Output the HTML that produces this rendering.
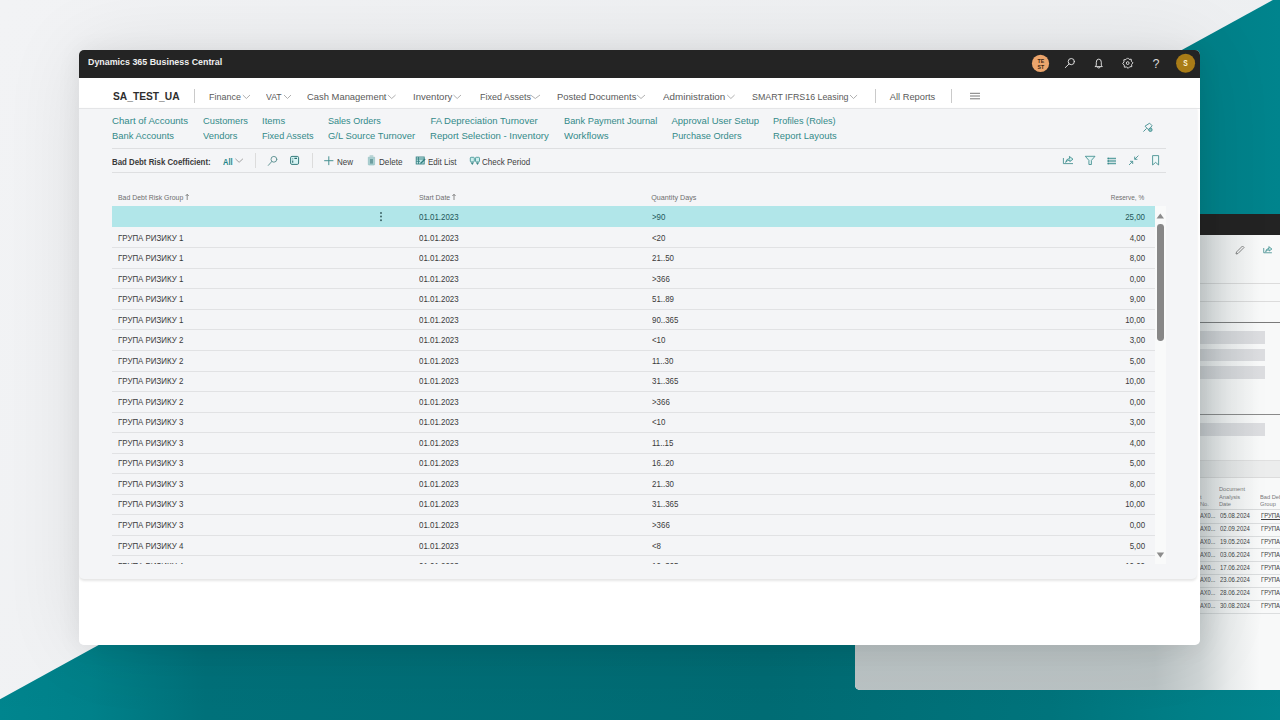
<!DOCTYPE html>
<html><head><meta charset="utf-8">
<style>
*{margin:0;padding:0;box-sizing:border-box}
html,body{width:1280px;height:720px;overflow:hidden}
body{position:relative;background:#f1f2f4;font-family:"Liberation Sans",sans-serif;color:#333}
.abs{position:absolute}
.t{position:absolute;white-space:nowrap;line-height:1}
#bg{position:absolute;left:0;top:0;width:1280px;height:720px}
#win2{position:absolute;left:855px;top:214px;width:425px;height:476px;border-radius:0 0 0 5px;overflow:hidden;background:#f5f6f7}
#win{position:absolute;left:79px;top:50px;width:1121px;height:595px;border-radius:5px;overflow:hidden;background:#fff}
#winsh{position:absolute;left:79px;top:50px;width:1121px;height:595px;border-radius:5px;box-shadow:0 0 80px rgba(0,0,0,0.09),0 2px 24px rgba(0,0,0,0.07)}
#topbar{position:absolute;left:0;top:0;width:1121px;height:28px;background:#242424}
#content{position:absolute;left:0;top:58px;width:1118px;height:470.9px;background:#f4f5f7;border-radius:0 0 5px 5px;box-shadow:0 1.2px 2.5px rgba(0,0,0,0.10)}
.nav{font-size:9.6px;color:#555;top:42px}
.lk{font-size:9.6px;color:#1e8a8e}
.tbt{font-size:8.2px;color:#3b3b3b;top:106.5px}
.hd{font-size:7.3px;color:#6b6b6b;top:143.5px}
.row{position:absolute;left:33px;width:1043px;height:20.53px}
.c{position:absolute;top:6.3px;font-size:8.8px;color:#3b3b3b;white-space:nowrap;line-height:1}
.c1{left:6px}.c2{left:307px}.c3{left:540px}.c4{right:9.6px}
.dots{position:absolute;left:268.1px;top:6.2px;width:2px;height:2px;border-radius:1px;background:#3f6668;box-shadow:0 3.6px 0 #3f6668,0 7.2px 0 #3f6668}
.chev{position:absolute;width:4px;height:4px;border-right:1px solid #9a9a9a;border-bottom:1px solid #9a9a9a;transform:rotate(45deg)}
.sep{position:absolute;width:1px;background:#d6d6d6}
svg.ic{position:absolute;overflow:visible}

</style></head><body>
<div id="root" style="position:absolute;left:0;top:0;width:1280px;height:720px;overflow:hidden">
<svg id="bg" viewBox="0 0 1280 720" width="1280" height="720">
<defs>
<linearGradient id="tg" x1="0" y1="0" x2="1280" y2="0" gradientUnits="userSpaceOnUse">
<stop offset="0" stop-color="#00858e"/><stop offset="0.07" stop-color="#00818a"/><stop offset="0.16" stop-color="#00717a"/><stop offset="0.6" stop-color="#006c74"/><stop offset="0.82" stop-color="#00747c"/><stop offset="0.93" stop-color="#007f87"/><stop offset="1" stop-color="#00848d"/>
</linearGradient>
<linearGradient id="vs" x1="0" y1="645" x2="0" y2="720" gradientUnits="userSpaceOnUse">
<stop offset="0" stop-color="#000" stop-opacity="0.02"/><stop offset="1" stop-color="#000" stop-opacity="0"/>
</linearGradient>
<linearGradient id="bgg" x1="0" y1="0" x2="1280" y2="720" gradientUnits="userSpaceOnUse">
<stop offset="0" stop-color="#f2f3f5"/><stop offset="1" stop-color="#eceef0"/>
</linearGradient>
</defs>
<rect x="0" y="0" width="1280" height="720" fill="url(#bgg)"/>
<polygon points="1272.9,0 1280,0 1280,720 0,720 0,699.2" fill="url(#tg)"/>
<clipPath id="tc"><polygon points="1272.9,0 1280,0 1280,720 0,720 0,699.2"/></clipPath>
<rect x="0" y="645" width="1280" height="75" fill="url(#vs)" clip-path="url(#tc)"/>
</svg>

<div id="win2">
 <div class="abs" style="left:0;top:0;width:425px;height:21px;background:#232323"></div>
 <div class="abs" style="left:0;top:21px;width:425px;height:455px;background:#f8f9f9"></div>
 <svg class="ic" style="left:378px;top:29px" width="14" height="14" viewBox="0 0 14 14"><path d="M3 11 L3.5 9 L9.5 3 L11 4.5 L5 10.5 Z" fill="none" stroke="#777" stroke-width="0.9"/></svg>
 <svg class="ic" style="left:0;top:0" width="425" height="60" viewBox="0 0 425 60"><g transform="translate(412.8 35.7) scale(0.85) translate(-1068.2 -160)" fill="none" stroke="#3f8c8e" stroke-width="0.95" stroke-linejoin="round"><path d="M1063.4 158 V163.6 H1073"/><path d="M1065.6 162.4 Q1066 159 1069.6 158.4 L1069.4 156.4 L1073 159.2 L1069.8 161.6 L1069.8 160 Q1067.4 160.2 1065.6 162.4 Z" fill="#cdeeed"/></g></svg>
 <div class="abs" style="left:0;top:68.5px;width:425px;height:1px;background:#dcdcdc"></div>
 <div class="abs" style="left:0;top:86.5px;width:425px;height:1px;background:#dcdcdc"></div>
 <div class="abs" style="left:0;top:107.5px;width:425px;height:1px;background:#7a7a7a"></div>
 <div class="abs" style="left:0;top:117px;width:410px;height:13px;background:#dcdde0"></div>
 <div class="abs" style="left:0;top:134.5px;width:410px;height:12.5px;background:#dcdde0"></div>
 <div class="abs" style="left:0;top:152px;width:410px;height:13px;background:#dcdde0"></div>
 <div class="abs" style="left:0;top:200px;width:425px;height:1px;background:#8a8a8a"></div>
 <div class="abs" style="left:0;top:209px;width:410px;height:13px;background:#dcdde0"></div>
 <div class="abs" style="left:0;top:246px;width:425px;height:1px;background:#e0e0e0"></div>
 <div class="abs" style="left:0;top:247px;width:425px;height:16px;background:#eceded"></div>
 <div class="abs" style="left:0;top:263px;width:425px;height:1px;background:#dcdcdc"></div>
 <div id="w2tbl"><div class="t" style="left:363.90px;top:272.22px;font-size:6.0px;color:#7a7a7a;transform:scaleX(0.95);transform-origin:0 0;">Document</div>
<div class="t" style="left:363.90px;top:279.52px;font-size:6.0px;color:#7a7a7a;transform:scaleX(0.95);transform-origin:0 0;">Analysis</div>
<div class="t" style="left:363.90px;top:287.22px;font-size:6.0px;color:#7a7a7a;transform:scaleX(0.95);transform-origin:0 0;">Date</div>
<div class="t" style="left:405.00px;top:279.52px;font-size:6.0px;color:#7a7a7a;transform:scaleX(0.95);transform-origin:0 0;">Bad Debt</div>
<div class="t" style="left:405.00px;top:287.22px;font-size:6.0px;color:#7a7a7a;transform:scaleX(0.95);transform-origin:0 0;">Group</div>
<div class="t" style="left:344.80px;top:279.52px;font-size:6.0px;color:#7a7a7a;transform:scaleX(0.95);transform-origin:0 0;">t</div>
<div class="t" style="left:344.60px;top:287.22px;font-size:6.0px;color:#7a7a7a;transform:scaleX(0.95);transform-origin:0 0;">No.</div>
<div class="abs" style="left:0;top:295.40px;width:425px;height:0.8px;background:#d9dbdc"></div>
<div class="t" style="left:344.60px;top:299.21px;font-size:6.6px;color:#404040;transform:scaleX(0.86);transform-origin:0 0;">AX0...</div>
<div class="t" style="left:364.70px;top:299.21px;font-size:6.6px;color:#404040;transform:scaleX(0.905);transform-origin:0 0;">05.08.2024</div>
<div class="t" style="left:405.50px;top:299.21px;font-size:6.6px;color:#404040;transform:scaleX(0.9);transform-origin:0 0;text-decoration:underline;">ГРУПА РИЗИКУ</div>
<div class="abs" style="left:0;top:308.70px;width:425px;height:0.8px;background:#dcdedf"></div>
<div class="t" style="left:344.60px;top:312.06px;font-size:6.6px;color:#404040;transform:scaleX(0.86);transform-origin:0 0;">AX0...</div>
<div class="t" style="left:364.70px;top:312.06px;font-size:6.6px;color:#404040;transform:scaleX(0.905);transform-origin:0 0;">02.09.2024</div>
<div class="t" style="left:405.50px;top:312.06px;font-size:6.6px;color:#404040;transform:scaleX(0.9);transform-origin:0 0;">ГРУПА РИЗИКУ</div>
<div class="abs" style="left:0;top:321.55px;width:425px;height:0.8px;background:#dcdedf"></div>
<div class="t" style="left:344.60px;top:324.91px;font-size:6.6px;color:#404040;transform:scaleX(0.86);transform-origin:0 0;">AX0...</div>
<div class="t" style="left:364.70px;top:324.91px;font-size:6.6px;color:#404040;transform:scaleX(0.905);transform-origin:0 0;">19.05.2024</div>
<div class="t" style="left:405.50px;top:324.91px;font-size:6.6px;color:#404040;transform:scaleX(0.9);transform-origin:0 0;">ГРУПА РИЗИКУ</div>
<div class="abs" style="left:0;top:334.40px;width:425px;height:0.8px;background:#dcdedf"></div>
<div class="t" style="left:344.60px;top:337.76px;font-size:6.6px;color:#404040;transform:scaleX(0.86);transform-origin:0 0;">AX0...</div>
<div class="t" style="left:364.70px;top:337.76px;font-size:6.6px;color:#404040;transform:scaleX(0.905);transform-origin:0 0;">03.06.2024</div>
<div class="t" style="left:405.50px;top:337.76px;font-size:6.6px;color:#404040;transform:scaleX(0.9);transform-origin:0 0;">ГРУПА РИЗИКУ</div>
<div class="abs" style="left:0;top:347.25px;width:425px;height:0.8px;background:#dcdedf"></div>
<div class="t" style="left:344.60px;top:350.61px;font-size:6.6px;color:#404040;transform:scaleX(0.86);transform-origin:0 0;">AX0...</div>
<div class="t" style="left:364.70px;top:350.61px;font-size:6.6px;color:#404040;transform:scaleX(0.905);transform-origin:0 0;">17.06.2024</div>
<div class="t" style="left:405.50px;top:350.61px;font-size:6.6px;color:#404040;transform:scaleX(0.9);transform-origin:0 0;">ГРУПА РИЗИКУ</div>
<div class="abs" style="left:0;top:360.10px;width:425px;height:0.8px;background:#dcdedf"></div>
<div class="t" style="left:344.60px;top:363.46px;font-size:6.6px;color:#404040;transform:scaleX(0.86);transform-origin:0 0;">AX0...</div>
<div class="t" style="left:364.70px;top:363.46px;font-size:6.6px;color:#404040;transform:scaleX(0.905);transform-origin:0 0;">23.06.2024</div>
<div class="t" style="left:405.50px;top:363.46px;font-size:6.6px;color:#404040;transform:scaleX(0.9);transform-origin:0 0;">ГРУПА РИЗИКУ</div>
<div class="abs" style="left:0;top:372.95px;width:425px;height:0.8px;background:#dcdedf"></div>
<div class="t" style="left:344.60px;top:376.31px;font-size:6.6px;color:#404040;transform:scaleX(0.86);transform-origin:0 0;">AX0...</div>
<div class="t" style="left:364.70px;top:376.31px;font-size:6.6px;color:#404040;transform:scaleX(0.905);transform-origin:0 0;">28.06.2024</div>
<div class="t" style="left:405.50px;top:376.31px;font-size:6.6px;color:#404040;transform:scaleX(0.9);transform-origin:0 0;">ГРУПА РИЗИКУ</div>
<div class="abs" style="left:0;top:385.80px;width:425px;height:0.8px;background:#dcdedf"></div>
<div class="t" style="left:344.60px;top:389.16px;font-size:6.6px;color:#404040;transform:scaleX(0.86);transform-origin:0 0;">AX0...</div>
<div class="t" style="left:364.70px;top:389.16px;font-size:6.6px;color:#404040;transform:scaleX(0.905);transform-origin:0 0;">30.08.2024</div>
<div class="t" style="left:405.50px;top:389.16px;font-size:6.6px;color:#404040;transform:scaleX(0.9);transform-origin:0 0;">ГРУПА РИЗИКУ</div>
<div class="abs" style="left:0;top:398.65px;width:425px;height:0.8px;background:#dcdedf"></div></div>
 <div class="abs" style="left:0;top:21px;width:425px;height:455px;background:linear-gradient(90deg,rgba(95,115,118,0.40) 0px,rgba(95,115,118,0.40) 300px,rgba(95,115,118,0.27) 345px,rgba(95,115,118,0.10) 375px,rgba(95,115,118,0.0) 405px)"></div>
</div>

<div id="winsh"></div>
<div id="win">
 <div id="topbar"></div>


 <div id="content"></div>
 <div class="abs" style="left:0;top:57.6px;width:1121px;height:0.8px;background:#e4e5e7"></div>

 <!-- nav separators / chevrons -->
 <div class="sep" style="left:114.7px;top:38.6px;height:14px;background:#cacaca"></div>
 <svg class="ic" style="left:0;top:0" width="1121" height="60" viewBox="0 0 1121 60">
  <g fill="none" stroke="#9c9c9c" stroke-width="0.8">
   <polyline points="163.8,45 167.4,48.5 171,45"/>
   <polyline points="205,45 208.5,48.5 212,45"/>
   <polyline points="308.9,45 312.7,48.5 316.6,45"/>
   <polyline points="374.5,45 378.2,48.5 382,45"/>
   <polyline points="451.6,45 456.3,48.5 461,45"/>
   <polyline points="558,45 562,48.5 566,45"/>
   <polyline points="648.2,45 651.9,48.5 655.6,45"/>
   <polyline points="771,45 774.5,48.5 778.1,45"/>
  </g>
  <path d="M891 43.3 H901 M891 46 H901 M891 48.8 H901" stroke="#6a6a6a" stroke-width="0.9"/>
 </svg>
 <div class="sep" style="left:795.5px;top:38.6px;height:14px;background:#cacaca"></div>
 <div class="sep" style="left:871.5px;top:38.6px;height:14px;background:#cacaca"></div>

<div class="t" style="left:8.60px;top:8.01px;font-size:9.2px;font-weight:700;color:#efefef;transform:scaleX(0.9663);transform-origin:0 0;">Dynamics 365 Business Central</div>
<div class="t" style="left:34.30px;top:40.71px;font-size:11.8px;font-weight:700;color:#2e2e2e;transform:scaleX(0.8681);transform-origin:0 0;">SA_TEST_UA</div>
<div class="t" style="left:129.75px;top:43.33px;font-size:9.3px;color:#5a5a5a;transform:scaleX(0.9641);transform-origin:0 0;">Finance</div>
<div class="t" style="left:187.00px;top:43.33px;font-size:9.3px;color:#5a5a5a;transform:scaleX(0.9338);transform-origin:0 0;">VAT</div>
<div class="t" style="left:228.00px;top:43.33px;font-size:9.3px;color:#5a5a5a;transform:scaleX(1.0117);transform-origin:0 0;">Cash Management</div>
<div class="t" style="left:334.20px;top:43.33px;font-size:9.3px;color:#5a5a5a;transform:scaleX(1.0300);transform-origin:0 0;">Inventory</div>
<div class="t" style="left:400.60px;top:43.33px;font-size:9.3px;color:#5a5a5a;transform:scaleX(0.9673);transform-origin:0 0;">Fixed Assets</div>
<div class="t" style="left:477.80px;top:43.33px;font-size:9.3px;color:#5a5a5a;transform:scaleX(1.0105);transform-origin:0 0;">Posted Documents</div>
<div class="t" style="left:583.90px;top:43.33px;font-size:9.3px;color:#5a5a5a;transform:scaleX(1.0573);transform-origin:0 0;">Administration</div>
<div class="t" style="left:672.80px;top:43.33px;font-size:9.3px;color:#5a5a5a;transform:scaleX(0.9509);transform-origin:0 0;">SMART IFRS16 Leasing</div>
<div class="t" style="left:810.80px;top:43.33px;font-size:9.3px;color:#5a5a5a;">All Reports</div>
<div class="t" style="left:32.90px;top:66.16px;font-size:9.5px;color:#338a89;transform:scaleX(1.0149);transform-origin:0 0;">Chart of Accounts</div>
<div class="t" style="left:32.90px;top:81.46px;font-size:9.5px;color:#338a89;transform:scaleX(0.9865);transform-origin:0 0;">Bank Accounts</div>
<div class="t" style="left:123.50px;top:66.16px;font-size:9.5px;color:#338a89;transform:scaleX(0.9798);transform-origin:0 0;">Customers</div>
<div class="t" style="left:123.50px;top:81.46px;font-size:9.5px;color:#338a89;transform:scaleX(0.9868);transform-origin:0 0;">Vendors</div>
<div class="t" style="left:183.20px;top:66.16px;font-size:9.5px;color:#338a89;transform:scaleX(0.9946);transform-origin:0 0;">Items</div>
<div class="t" style="left:183.20px;top:81.46px;font-size:9.5px;color:#338a89;transform:scaleX(0.9563);transform-origin:0 0;">Fixed Assets</div>
<div class="t" style="left:249.40px;top:66.16px;font-size:9.5px;color:#338a89;transform:scaleX(0.9524);transform-origin:0 0;">Sales Orders</div>
<div class="t" style="left:249.40px;top:81.46px;font-size:9.5px;color:#338a89;transform:scaleX(0.9928);transform-origin:0 0;">G/L Source Turnover</div>
<div class="t" style="left:351.40px;top:66.16px;font-size:9.5px;color:#338a89;">FA Depreciation Turnover</div>
<div class="t" style="left:351.40px;top:81.46px;font-size:9.5px;color:#338a89;transform:scaleX(1.0080);transform-origin:0 0;">Report Selection - Inventory</div>
<div class="t" style="left:484.70px;top:66.16px;font-size:9.5px;color:#338a89;transform:scaleX(0.9761);transform-origin:0 0;">Bank Payment Journal</div>
<div class="t" style="left:484.70px;top:81.46px;font-size:9.5px;color:#338a89;transform:scaleX(1.0198);transform-origin:0 0;">Workflows</div>
<div class="t" style="left:592.50px;top:66.16px;font-size:9.5px;color:#338a89;">Approval User Setup</div>
<div class="t" style="left:592.50px;top:81.46px;font-size:9.5px;color:#338a89;transform:scaleX(0.9679);transform-origin:0 0;">Purchase Orders</div>
<div class="t" style="left:694.40px;top:66.16px;font-size:9.5px;color:#338a89;transform:scaleX(0.9641);transform-origin:0 0;">Profiles (Roles)</div>
<div class="t" style="left:694.40px;top:81.46px;font-size:9.5px;color:#338a89;transform:scaleX(0.9887);transform-origin:0 0;">Report Layouts</div>
<div class="t" style="left:33.20px;top:108.66px;font-size:8.2px;font-weight:700;color:#3a3a3a;transform:scaleX(0.9595);transform-origin:0 0;">Bad Debt Risk Coefficient:</div>
<div class="t" style="left:144.20px;top:108.49px;font-size:8.4px;font-weight:700;color:#23868a;transform:scaleX(0.8943);transform-origin:0 0;">All</div>
<div class="t" style="left:257.90px;top:108.66px;font-size:8.2px;color:#3d3d3d;transform:scaleX(0.9753);transform-origin:0 0;">New</div>
<div class="t" style="left:299.90px;top:108.66px;font-size:8.2px;color:#3d3d3d;transform:scaleX(0.9914);transform-origin:0 0;">Delete</div>
<div class="t" style="left:349.10px;top:108.66px;font-size:8.2px;color:#3d3d3d;transform:scaleX(0.9771);transform-origin:0 0;">Edit List</div>
<div class="t" style="left:403.10px;top:108.66px;font-size:8.2px;color:#3d3d3d;transform:scaleX(0.9792);transform-origin:0 0;">Check Period</div>
<div class="t" style="left:38.60px;top:143.81px;font-size:7.2px;color:#6e6e6e;transform:scaleX(0.9613);transform-origin:0 0;">Bad Debt Risk Group</div>
<div class="t" style="left:339.75px;top:143.81px;font-size:7.2px;color:#6e6e6e;transform:scaleX(0.9641);transform-origin:0 0;">Start Date</div>
<div class="t" style="left:572.25px;top:143.81px;font-size:7.2px;color:#6e6e6e;">Quantity Days</div>
<div class="t" style="right:55.60px;top:143.81px;font-size:7.2px;color:#6e6e6e;transform:scaleX(0.9002);transform-origin:100% 0">Reserve, %</div>


 <div class="abs" style="left:33px;top:98px;width:1054px;height:1px;background:#dedfe1"></div>
 <div class="abs" style="left:33px;top:122px;width:1054px;height:1px;background:#dedfe1"></div>

 <div class="sep" style="left:176.3px;top:103px;height:15px;background:#dcdcdc"></div>
 <div class="sep" style="left:232.6px;top:103px;height:15px;background:#dcdcdc"></div>
 <!-- header arrows -->
 <svg class="ic" style="left:0;top:0" width="1121" height="160" viewBox="0 0 1121 160">
  <g fill="none" stroke="#707070" stroke-width="0.8">
   <path d="M108.2 144.3 V150 M106.6 146 L108.2 144.3 L109.8 146"/>
   <path d="M375 144.3 V150 M373.4 146 L375 144.3 L376.6 146"/>
  </g>
 </svg>

 <div class="abs" style="left:0;top:156px;width:1121px;height:357.8px;overflow:hidden">
<div class="row" style="top:0.30px;background:#b1e6e9;"><span class="c" style="color:#24585a;left:306.70px;top:6.75px;transform:scaleX(0.9);transform-origin:0 0">01.01.2023</span><span class="c" style="color:#24585a;left:540.30px;top:6.75px;transform:scaleX(0.9);transform-origin:0 0">&gt;90</span><span class="c" style="color:#24585a;right:9.60px;top:6.75px;transform:scaleX(0.9);transform-origin:100% 0">25,00</span><span class="dots"></span></div>
<div class="row" style="top:20.83px;border-bottom:1px solid #e1e2e4;height:21.53px;"><span class="c" style="left:5.90px;top:6.75px;transform:scaleX(0.9);transform-origin:0 0">ГРУПА РИЗИКУ 1</span><span class="c" style="left:306.70px;top:6.75px;transform:scaleX(0.9);transform-origin:0 0">01.01.2023</span><span class="c" style="left:540.30px;top:6.75px;transform:scaleX(0.9);transform-origin:0 0">&lt;20</span><span class="c" style="right:9.60px;top:6.75px;transform:scaleX(0.9);transform-origin:100% 0">4,00</span></div>
<div class="row" style="top:41.36px;border-bottom:1px solid #e1e2e4;height:21.53px;"><span class="c" style="left:5.90px;top:6.75px;transform:scaleX(0.9);transform-origin:0 0">ГРУПА РИЗИКУ 1</span><span class="c" style="left:306.70px;top:6.75px;transform:scaleX(0.9);transform-origin:0 0">01.01.2023</span><span class="c" style="left:540.30px;top:6.75px;transform:scaleX(0.9);transform-origin:0 0">21..50</span><span class="c" style="right:9.60px;top:6.75px;transform:scaleX(0.9);transform-origin:100% 0">8,00</span></div>
<div class="row" style="top:61.89px;border-bottom:1px solid #e1e2e4;height:21.53px;"><span class="c" style="left:5.90px;top:6.75px;transform:scaleX(0.9);transform-origin:0 0">ГРУПА РИЗИКУ 1</span><span class="c" style="left:306.70px;top:6.75px;transform:scaleX(0.9);transform-origin:0 0">01.01.2023</span><span class="c" style="left:540.30px;top:6.75px;transform:scaleX(0.9);transform-origin:0 0">&gt;366</span><span class="c" style="right:9.60px;top:6.75px;transform:scaleX(0.9);transform-origin:100% 0">0,00</span></div>
<div class="row" style="top:82.42px;border-bottom:1px solid #e1e2e4;height:21.53px;"><span class="c" style="left:5.90px;top:6.75px;transform:scaleX(0.9);transform-origin:0 0">ГРУПА РИЗИКУ 1</span><span class="c" style="left:306.70px;top:6.75px;transform:scaleX(0.9);transform-origin:0 0">01.01.2023</span><span class="c" style="left:540.30px;top:6.75px;transform:scaleX(0.9);transform-origin:0 0">51..89</span><span class="c" style="right:9.60px;top:6.75px;transform:scaleX(0.9);transform-origin:100% 0">9,00</span></div>
<div class="row" style="top:102.95px;border-bottom:1px solid #e1e2e4;height:21.53px;"><span class="c" style="left:5.90px;top:6.75px;transform:scaleX(0.9);transform-origin:0 0">ГРУПА РИЗИКУ 1</span><span class="c" style="left:306.70px;top:6.75px;transform:scaleX(0.9);transform-origin:0 0">01.01.2023</span><span class="c" style="left:540.30px;top:6.75px;transform:scaleX(0.9);transform-origin:0 0">90..365</span><span class="c" style="right:9.60px;top:6.75px;transform:scaleX(0.9);transform-origin:100% 0">10,00</span></div>
<div class="row" style="top:123.48px;border-bottom:1px solid #e1e2e4;height:21.53px;"><span class="c" style="left:5.90px;top:6.75px;transform:scaleX(0.9);transform-origin:0 0">ГРУПА РИЗИКУ 2</span><span class="c" style="left:306.70px;top:6.75px;transform:scaleX(0.9);transform-origin:0 0">01.01.2023</span><span class="c" style="left:540.30px;top:6.75px;transform:scaleX(0.9);transform-origin:0 0">&lt;10</span><span class="c" style="right:9.60px;top:6.75px;transform:scaleX(0.9);transform-origin:100% 0">3,00</span></div>
<div class="row" style="top:144.01px;border-bottom:1px solid #e1e2e4;height:21.53px;"><span class="c" style="left:5.90px;top:6.75px;transform:scaleX(0.9);transform-origin:0 0">ГРУПА РИЗИКУ 2</span><span class="c" style="left:306.70px;top:6.75px;transform:scaleX(0.9);transform-origin:0 0">01.01.2023</span><span class="c" style="left:540.30px;top:6.75px;transform:scaleX(0.9);transform-origin:0 0">11..30</span><span class="c" style="right:9.60px;top:6.75px;transform:scaleX(0.9);transform-origin:100% 0">5,00</span></div>
<div class="row" style="top:164.54px;border-bottom:1px solid #e1e2e4;height:21.53px;"><span class="c" style="left:5.90px;top:6.75px;transform:scaleX(0.9);transform-origin:0 0">ГРУПА РИЗИКУ 2</span><span class="c" style="left:306.70px;top:6.75px;transform:scaleX(0.9);transform-origin:0 0">01.01.2023</span><span class="c" style="left:540.30px;top:6.75px;transform:scaleX(0.9);transform-origin:0 0">31..365</span><span class="c" style="right:9.60px;top:6.75px;transform:scaleX(0.9);transform-origin:100% 0">10,00</span></div>
<div class="row" style="top:185.07px;border-bottom:1px solid #e1e2e4;height:21.53px;"><span class="c" style="left:5.90px;top:6.75px;transform:scaleX(0.9);transform-origin:0 0">ГРУПА РИЗИКУ 2</span><span class="c" style="left:306.70px;top:6.75px;transform:scaleX(0.9);transform-origin:0 0">01.01.2023</span><span class="c" style="left:540.30px;top:6.75px;transform:scaleX(0.9);transform-origin:0 0">&gt;366</span><span class="c" style="right:9.60px;top:6.75px;transform:scaleX(0.9);transform-origin:100% 0">0,00</span></div>
<div class="row" style="top:205.60px;border-bottom:1px solid #e1e2e4;height:21.53px;"><span class="c" style="left:5.90px;top:6.75px;transform:scaleX(0.9);transform-origin:0 0">ГРУПА РИЗИКУ 3</span><span class="c" style="left:306.70px;top:6.75px;transform:scaleX(0.9);transform-origin:0 0">01.01.2023</span><span class="c" style="left:540.30px;top:6.75px;transform:scaleX(0.9);transform-origin:0 0">&lt;10</span><span class="c" style="right:9.60px;top:6.75px;transform:scaleX(0.9);transform-origin:100% 0">3,00</span></div>
<div class="row" style="top:226.13px;border-bottom:1px solid #e1e2e4;height:21.53px;"><span class="c" style="left:5.90px;top:6.75px;transform:scaleX(0.9);transform-origin:0 0">ГРУПА РИЗИКУ 3</span><span class="c" style="left:306.70px;top:6.75px;transform:scaleX(0.9);transform-origin:0 0">01.01.2023</span><span class="c" style="left:540.30px;top:6.75px;transform:scaleX(0.9);transform-origin:0 0">11..15</span><span class="c" style="right:9.60px;top:6.75px;transform:scaleX(0.9);transform-origin:100% 0">4,00</span></div>
<div class="row" style="top:246.66px;border-bottom:1px solid #e1e2e4;height:21.53px;"><span class="c" style="left:5.90px;top:6.75px;transform:scaleX(0.9);transform-origin:0 0">ГРУПА РИЗИКУ 3</span><span class="c" style="left:306.70px;top:6.75px;transform:scaleX(0.9);transform-origin:0 0">01.01.2023</span><span class="c" style="left:540.30px;top:6.75px;transform:scaleX(0.9);transform-origin:0 0">16..20</span><span class="c" style="right:9.60px;top:6.75px;transform:scaleX(0.9);transform-origin:100% 0">5,00</span></div>
<div class="row" style="top:267.19px;border-bottom:1px solid #e1e2e4;height:21.53px;"><span class="c" style="left:5.90px;top:6.75px;transform:scaleX(0.9);transform-origin:0 0">ГРУПА РИЗИКУ 3</span><span class="c" style="left:306.70px;top:6.75px;transform:scaleX(0.9);transform-origin:0 0">01.01.2023</span><span class="c" style="left:540.30px;top:6.75px;transform:scaleX(0.9);transform-origin:0 0">21..30</span><span class="c" style="right:9.60px;top:6.75px;transform:scaleX(0.9);transform-origin:100% 0">8,00</span></div>
<div class="row" style="top:287.72px;border-bottom:1px solid #e1e2e4;height:21.53px;"><span class="c" style="left:5.90px;top:6.75px;transform:scaleX(0.9);transform-origin:0 0">ГРУПА РИЗИКУ 3</span><span class="c" style="left:306.70px;top:6.75px;transform:scaleX(0.9);transform-origin:0 0">01.01.2023</span><span class="c" style="left:540.30px;top:6.75px;transform:scaleX(0.9);transform-origin:0 0">31..365</span><span class="c" style="right:9.60px;top:6.75px;transform:scaleX(0.9);transform-origin:100% 0">10,00</span></div>
<div class="row" style="top:308.25px;border-bottom:1px solid #e1e2e4;height:21.53px;"><span class="c" style="left:5.90px;top:6.75px;transform:scaleX(0.9);transform-origin:0 0">ГРУПА РИЗИКУ 3</span><span class="c" style="left:306.70px;top:6.75px;transform:scaleX(0.9);transform-origin:0 0">01.01.2023</span><span class="c" style="left:540.30px;top:6.75px;transform:scaleX(0.9);transform-origin:0 0">&gt;366</span><span class="c" style="right:9.60px;top:6.75px;transform:scaleX(0.9);transform-origin:100% 0">0,00</span></div>
<div class="row" style="top:328.78px;border-bottom:1px solid #e1e2e4;height:21.53px;"><span class="c" style="left:5.90px;top:6.75px;transform:scaleX(0.9);transform-origin:0 0">ГРУПА РИЗИКУ 4</span><span class="c" style="left:306.70px;top:6.75px;transform:scaleX(0.9);transform-origin:0 0">01.01.2023</span><span class="c" style="left:540.30px;top:6.75px;transform:scaleX(0.9);transform-origin:0 0">&lt;8</span><span class="c" style="right:9.60px;top:6.75px;transform:scaleX(0.9);transform-origin:100% 0">5,00</span></div>
<div class="row" style="top:349.31px;border-bottom:1px solid #e1e2e4;height:21.53px;"><span class="c" style="left:5.90px;top:6.75px;transform:scaleX(0.9);transform-origin:0 0">ГРУПА РИЗИКУ 4</span><span class="c" style="left:306.70px;top:6.75px;transform:scaleX(0.9);transform-origin:0 0">01.01.2023</span><span class="c" style="left:540.30px;top:6.75px;transform:scaleX(0.9);transform-origin:0 0">10..365</span><span class="c" style="right:9.60px;top:6.75px;transform:scaleX(0.9);transform-origin:100% 0">10,00</span></div>
 </div>
 <!-- scrollbar -->
 <div class="abs" style="left:1076px;top:156px;width:11px;height:358px;background:#f9fafa"></div>
 <div class="abs" style="left:1078.1px;top:174px;width:6.7px;height:116.6px;border-radius:3.4px;background:#878787"></div>
</div>
<svg class="abs" style="left:0;top:0;pointer-events:none" width="1280" height="720" viewBox="0 0 1280 720">
 <!-- top bar -->
 <circle cx="1040.5" cy="63.4" r="8.6" fill="#eca56c"/>
 <text x="1040.9" y="62.6" font-size="5.8" font-weight="700" text-anchor="middle" fill="#3a2612" font-family="Liberation Sans" transform="translate(1040.9 0) scale(0.9 1) translate(-1040.9 0)">TE</text>
 <text x="1040.9" y="68.9" font-size="5.8" font-weight="700" text-anchor="middle" fill="#3a2612" font-family="Liberation Sans" transform="translate(1040.9 0) scale(0.9 1) translate(-1040.9 0)">ST</text>
 <g fill="none" stroke="#e2e2e2" stroke-width="0.95" stroke-linecap="round">
  <circle cx="1071.3" cy="61.6" r="3.1"/>
  <path d="M1069 64 L1065.3 67.6"/>
  <path d="M1095.3 66.6 H1102.3 L1101.3 65.2 V62.2 Q1101.3 59.1 1098.8 59.1 Q1096.3 59.1 1096.3 62.2 V65.2 Z" stroke-linejoin="round"/>
  <path d="M1097.6 67.6 Q1098.8 68.8 1100 67.6"/>
 </g>
 <g fill="none" stroke="#e2e2e2" stroke-width="0.95">
  <path d="M1127.6 57.9 L1129.1 59.4 L1131.2 59.2 L1131.4 61.3 L1132.9 62.8 L1131.6 64.5 L1131.8 66.6 L1129.7 66.8 L1128.2 68.3 L1126.5 67 L1124.4 67.2 L1124.2 65.1 L1122.7 63.6 L1124 61.9 L1123.8 59.8 L1125.9 59.6 Z" stroke-linejoin="round"/>
  <circle cx="1127.7" cy="63.1" r="1.4"/>
 </g>
 <text x="1156" y="67.7" font-size="12.6" text-anchor="middle" fill="#dadada" font-family="Liberation Sans">?</text>
 <circle cx="1185.6" cy="63.25" r="9.5" fill="#a97c17"/>
 <text x="1185.5" y="66.4" font-size="8.2" font-weight="700" text-anchor="middle" fill="#fff4d6" font-family="Liberation Sans" transform="translate(1185.5 0) scale(0.82 1) translate(-1185.5 0)">S</text>

 <!-- pin -->
 <g fill="none" stroke="#3f8c8e" stroke-width="0.9" stroke-linejoin="round">
  <path d="M1143.4 131.6 L1146.6 128.4"/>
  <path d="M1145.0 126.2 L1149.6 123.2 L1152 125.6 L1149 130.2 Z"/>
  <circle cx="1150.4" cy="129.8" r="1.7" fill="#8fc6c2"/>
 </g>

 <!-- toolbar left -->
 <polyline points="235.4,158.8 239.1,162.3 242.9,158.8" fill="none" stroke="#8a8a8a" stroke-width="0.8"/>
 <g fill="none" stroke="#5d9192" stroke-width="0.95" stroke-linecap="round">
  <circle cx="273.9" cy="159.3" r="2.9"/>
  <path d="M271.8 161.5 L268.3 165.4"/>
 </g>
 <rect x="290.6" y="156.4" width="8" height="8" rx="1.3" fill="#d6f3f3" stroke="#357b7d" stroke-width="1"/>
 <path d="M292.7 158.6 V159.2 M292.7 160.5 V162.8 M294.4 158.4 H297" stroke="#2e6e70" stroke-width="1.1"/>
 <path d="M324.2 160.7 H333.4 M328.8 156.3 V165.1" stroke="#3f8c8e" stroke-width="0.95"/>
 <path d="M368.3 157.2 H374.6 V164.4 Q374.6 165 374 165 H368.9 Q368.3 165 368.3 164.4 Z" fill="#a9cfd0" stroke="#8fbcbd" stroke-width="0.6"/>
 <path d="M369.6 156 H373.3" stroke="#8fbcbd" stroke-width="1"/>
 <rect x="370.0" y="159" width="3" height="4.6" fill="#6d9ea0"/>
 <g stroke="#3a8385" stroke-width="0.9" fill="none">
  <rect x="416.2" y="157" width="8" height="7" fill="#bfe6e6"/>
  <path d="M416.2 159 H424.2 M416.2 161.3 H420 M418.5 157 V164"/>
 </g>
 <path d="M420.2 164.3 L420.8 162.3 L424.6 158.5 L425.6 159.5 L421.8 163.3 Z" fill="#2f7c7e"/>
 <g stroke="#4a9a9a" stroke-width="0.9" fill="#cdeeed">
  <rect x="470.3" y="157.3" width="4" height="4.6" rx="0.8"/>
  <rect x="475.5" y="157.3" width="4" height="4.6" rx="0.8"/>
 </g>
 <path d="M470.6 162.6 L472.3 165 L474 162.6 Z M475.8 162.6 L477.5 165 L479.2 162.6 Z" fill="#3a8686"/>

 <!-- toolbar right -->
 <g fill="none" stroke="#3f8c8e" stroke-width="0.85" stroke-linejoin="round">
  <path d="M1063.4 158 V163.6 H1073"/>
  <path d="M1065.6 162.4 Q1066 159 1069.6 158.4 L1069.4 156.4 L1073 159.2 L1069.8 161.6 L1069.8 160 Q1067.4 160.2 1065.6 162.4 Z" fill="#cdeeed"/>
  <path d="M1085.3 156.3 H1095 L1091.4 160.4 V164.5 H1088.9 V160.4 Z" fill="#e3f4f4"/>
  <path d="M1129 165 L1132.6 161.4 M1130 161.3 H1132.7 V164 M1138.4 155.6 L1134.8 159.2 M1134.7 156.6 V159.3 H1137.4"/>
  <path d="M1152.6 155.6 H1158.6 V165 L1155.6 162.4 L1152.6 165 Z" fill="#eef8f8"/>
 </g>
 <path d="M1107.6 158.6 H1116 M1107.6 161 H1116 M1107.6 163.4 H1116" stroke="#5fa3a4" stroke-width="1.5"/>
 <path d="M1107.6 158.6 H1109 M1107.6 161 H1109 M1107.6 163.4 H1109" stroke="#3f8c8e" stroke-width="1.5"/>

 <!-- scrollbar arrows -->
 <path d="M1156.6 218.6 L1160.3 213.4 L1164 218.6 Z" fill="#8c8c8c"/>
 <path d="M1156.7 552.6 L1160.4 557.8 L1164.1 552.6 Z" fill="#8c8c8c"/>
</svg>



</div>
</body></html>
